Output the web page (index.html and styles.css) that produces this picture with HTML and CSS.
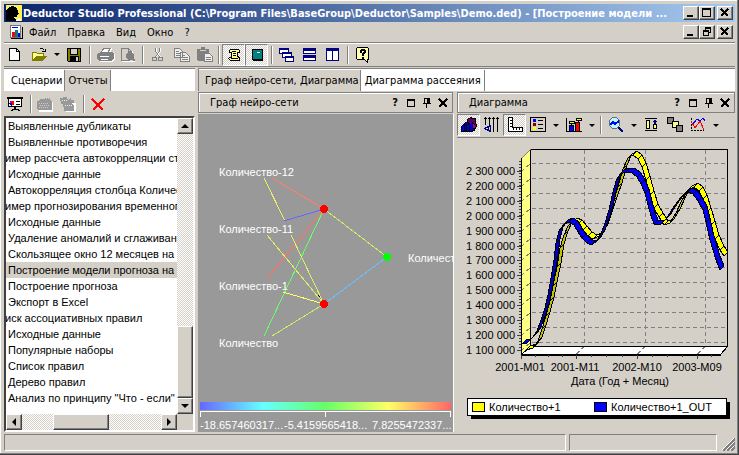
FILE: index.html
```html
<!DOCTYPE html>
<html lang="ru">
<head>
<meta charset="utf-8">
<title>Deductor Studio Professional</title>
<link rel="stylesheet" href="styles.css">
</head>
<body>
<div class="window">
  <header class="titlebar">
    <svg class="app-icon" width="16" height="16" viewBox="0 0 16 16"><path fill="#ffef50" d="M0 0h16v16H0z"/><path d="M0 6l3-4 4-1 4 2 1 3 1 3-2 1v2H8l1 2 4 2v2H0z"/><path fill="#fff" d="M12 13l3 1v2h-5z"/></svg>
    <h1>Deductor Studio Professional (C:\Program Files\BaseGroup\Deductor\Samples\Demo.ded) - [Построение модели ...</h1>
    <div class="win-buttons">
      <button aria-label="Свернуть"><svg width="12" height="10" viewBox="0 0 12 10"><path d="M2 7h6v2H2z"/></svg></button>
      <button aria-label="Развернуть"><svg width="12" height="10" viewBox="0 0 12 10"><path fill-rule="evenodd" d="M1 0h9v9H1zM2 2v6h7V2z"/></svg></button>
      <button class="close" aria-label="Закрыть"><svg width="12" height="10" viewBox="0 0 12 10"><path class="x" d="M2 1l7 7m0-7l-7 7"/></svg></button>
    </div>
  </header>
  <nav class="menubar">
    <svg class="doc-icon" width="15" height="16" viewBox="0 0 15 16"><path fill="#fff" stroke="#777" d="M1.500 1.500h10v12h-10z"/><path d="M2 14h11V3h1v12H2z"/><path fill="#00f" d="M3 3h6v1H3z"/><path fill="#f00" d="M3 8h3v5H3z"/><path fill="#008080" d="M6 6h3v7H6z"/><path fill="#00f" d="M9 9h2v4H9z"/></svg>
    <button>Файл</button><button>Правка</button><button>Вид</button><button>Окно</button><button>?</button>
    <div class="win-buttons">
      <button aria-label="Свернуть документ"><svg width="12" height="10" viewBox="0 0 12 10"><path d="M2 7h6v2H2z"/></svg></button>
      <button aria-label="Восстановить документ"><svg width="12" height="10" viewBox="0 0 12 10"><path fill-rule="evenodd" d="M4 0h6v6H8v3H2V3h2zM5 2v1h3v2h1V2zM3 5v3h4V5z"/></svg></button>
      <button class="close" aria-label="Закрыть документ"><svg width="12" height="10" viewBox="0 0 12 10"><path class="x" d="M2 1l7 7m0-7l-7 7"/></svg></button>
    </div>
  </nav>
  <div class="toolbar">
    <button class="tool" aria-label="Новый"><svg width="16" height="16" viewBox="0 0 16 16"><path fill="#fff" stroke="#000" d="M1.500 1.500h7l3 3v9h-10z"/><path fill="none" stroke="#000" d="M8.500 1.500v3h3"/></svg></button>
    <button class="tool" aria-label="Открыть"><svg width="16" height="16" viewBox="0 0 16 16"><path fill="none" stroke="#000" d="M8.500 2.500c2-2 4-1 5 1M11 4.500h3v-3"/><path fill="#ff8" stroke="#808000" d="M1.500 13V5.500h4l1 1h6V9"/><path fill="#808000" d="M1 14l4-5h11l-4 5z"/></svg></button>
    <button class="drop" aria-label="Недавние"><i class="caret"></i></button>
    <button class="tool" aria-label="Сохранить"><svg width="16" height="16" viewBox="0 0 16 16"><path d="M0 1h14v14H1l-1-1z"/><path fill="#808000" d="M1 2h2v6h8V2h2v12H1z"/><path fill="#d4d0c8" d="M4 2h6v5H4z"/><path d="M3 9h9v5H3z"/><path fill="#d4d0c8" d="M9 10h2v4H9z"/></svg></button>
    <i class="sep"></i>
    <button class="tool" aria-label="Печать" disabled><svg width="18" height="16" viewBox="0 0 18 16"><path fill="#fff" d="M1 8l3-3 2-4h9l-1 4h3l1 3v4l-3 3H3l-2-2z"/><path fill="#808080" fill-rule="evenodd" d="M0 7l4-2 2-4h8l-2 4h3l2 2v4l-3 3H2l-2-2zM7 2L5 5h6l1-3zM3 9v1h9V9zm1 3v1h7v-1z"/></svg></button>
    <button class="tool" aria-label="Просмотр" disabled><svg width="17" height="16" viewBox="0 0 17 16"><path fill="none" stroke="#fff" d="M2 14.500h13M12.500 4v3"/><path fill="none" stroke="#808080" d="M1.500 13.500v-12h7l3 3v2M8.500 1.500v3h3M1.500 13.500h8"/><circle cx="10" cy="9" r="4" fill="#808080"/><path stroke="#808080" stroke-width="2" d="M12 11l3 3"/></svg></button>
    <i class="sep"></i>
    <button class="tool" aria-label="Вырезать" disabled><svg width="16" height="16" viewBox="0 0 16 16"><path fill="none" stroke="#fff" d="M6.500 1v3l4 6m0-9v3l-4 6"/><path fill="none" stroke="#808080" d="M5.500 1v3l4 6m0-9v3l-4 6"/><circle cx="4.500" cy="12" r="2" fill="none" stroke="#808080"/><circle cx="10.500" cy="12" r="2" fill="none" stroke="#808080"/></svg></button>
    <button class="tool" aria-label="Копировать" disabled><svg width="18" height="16" viewBox="0 0 18 16"><path fill="#eee" stroke="#808080" d="M1.500 1.500h5l3 3v6h-8zM7.500 5.500h5l4 4v5h-9z"/><path stroke="#808080" d="M3 4.500h3M3 6.500h4M3 8.500h4M9 8.500h3M9 10.500h6M9 12.500h6"/></svg></button>
    <button class="tool" aria-label="Вставить" disabled><svg width="18" height="16" viewBox="0 0 18 16"><path fill="#808080" d="M1 2h4V0h4v2h4v12H2l-1-1z"/><path fill="#d4d0c8" d="M4 3h6v1H4z"/><path fill="#eee" stroke="#808080" d="M8.500 6.500h5l3 3v5h-8z"/><path stroke="#808080" d="M10 10.500h5M10 12.500h5"/></svg></button>
    <i class="sep"></i>
    <button class="tool pressed" aria-label="Сценарии"><svg width="16" height="16" viewBox="0 0 16 16"><path fill="#ffff90" stroke="#000" d="M4.500 2.500h8l1 1v2h-2v4l2 1v3h-9l-2-2 1-1h2v-5h-2v-2z"/><path stroke="#000" d="M6 4.500h4M7 6.500h3M7 8.500h3M5 11.500h7"/></svg></button>
    <button class="tool pressed" aria-label="Отчеты"><svg width="16" height="16" viewBox="0 0 16 16"><path d="M3 2h11v12H4l-1-1z"/><path fill="#008080" d="M4 3h9v9H4z"/><path fill="#fff" d="M8 5h3v1H8zM2 4h1v1H2zM2 7h1v1H2zM2 10h1v1H2z"/></svg></button>
    <i class="sep"></i>
    <button class="tool" aria-label="Каскадом"><svg width="16" height="16" viewBox="0 0 16 16"><g fill="#fff" stroke="#000080"><path d="M.5 1.500h9v5h-9zM3.500 5.500h9v5h-9zM6.500 9.500h8v5h-8z"/><path stroke-width="2" d="M0 2h10M3 6h10M6 10h9"/></g></svg></button>
    <button class="tool" aria-label="По горизонтали"><svg width="16" height="16" viewBox="0 0 16 16"><g fill="#fff" stroke="#000080"><path d="M1.500 1.500h12v5h-12zM1.500 8.500h12v5h-12z"/><path stroke-width="2" d="M1 3h13M1 10h13"/></g></svg></button>
    <button class="tool" aria-label="По вертикали"><svg width="16" height="16" viewBox="0 0 16 16"><g fill="#fff" stroke="#000080"><path d="M1.500 1.500h6v12h-6zM7.500 1.500h6v12h-6z"/><path stroke-width="2" d="M1 3h13"/></g></svg></button>
    <i class="sep"></i>
    <button class="tool" aria-label="Справка"><svg width="16" height="16" viewBox="0 0 16 16"><path fill="#ffffb0" stroke="#000" d="M2.500.5h10l1 1v11h-1v3l-3-3h-7l-1-1v-10z"/><path d="M5 3h1V2h4v1h1v3h-1v1H9v2H7V6h1V5h1V4H7v2H5zM7 10h2v2H7z"/></svg></button>
  </div>

  <div class="workspace">
    <aside class="sidebar">
      <div class="tabs"><button class="tab plain">Сценарии</button><button class="tab active">Отчеты</button></div>
      <div class="side-tools">
        <button class="tool" aria-label="Показать"><svg width="16" height="16" viewBox="0 0 16 16"><path fill="#fff" stroke="#000" d="M1.500 2.500h13v8h-13z"/><path d="M0 1h16v2H0zM7 11h2v2h2l2 2h-2l-1-1H6l-1 1H3l2-2h2z"/><circle cx="5" cy="7" r="2.500" fill="#f00"/><path fill="#00f" d="M5 4v3H2v1l2 2h1z"/><path stroke="#000" d="M9 5.500h4M9 8.500h4"/></svg></button>
        <i class="sep"></i>
        <button class="tool" aria-label="Добавить папку" disabled><svg width="16" height="16" viewBox="0 0 16 16"><path fill="#fff" d="M1 5l15 1v10H2z"/><path fill="#999" d="M0 5h2l1-2h4l2-2v2l2-2v2l2-2v3l2 1v9H1l-1-1z"/><path fill="none" stroke="#ccc" stroke-dasharray="1 1" d="M2 7.500h10M3 9.500h10M2 11.500h10"/></svg></button>
        <button class="tool" aria-label="Добавить узел" disabled><svg width="16" height="16" viewBox="0 0 16 16"><path fill="#fff" d="M5 7h11v9H6z"/><path fill="#999" d="M0 2h3V1h4l1 3 3-2v2h3v3h-3l3 2v6H4v-4H3V8H1z"/><path stroke="#eee" stroke-dasharray="1 1" d="M2 4.500h6M5 9.500h7"/></svg></button>
        <i class="sep"></i>
        <button class="tool" aria-label="Удалить"><svg width="16" height="16" viewBox="0 0 16 16"><path stroke="red" stroke-width="2" d="M2 3l11 11M14 3L3 14"/></svg></button>
      </div>
      <div class="tree">
        <ul>
          <li>Выявленные дубликаты</li>
          <li>Выявленные противоречия</li>
          <li class="parent">имер рассчета автокорреляции ст</li>
          <li>Исходные данные</li>
          <li>Автокорреляция столбца Количес</li>
          <li class="parent">имер прогнозирования временног</li>
          <li>Исходные данные</li>
          <li>Удаление аномалий и сглаживан</li>
          <li>Скользящее окно 12 месяцев на</li>
          <li class="selected">Построение модели прогноза на</li>
          <li>Построение прогноза</li>
          <li>Экспорт в Excel</li>
          <li class="parent">иск ассоциативных правил</li>
          <li>Исходные данные</li>
          <li>Популярные наборы</li>
          <li>Список правил</li>
          <li>Дерево правил</li>
          <li>Анализ по принципу "Что - если"</li>
        </ul>
        <div class="scroll vertical"><button aria-label="Вверх"><i class="arrow up"></i></button><span class="track before"></span><span class="thumb"></span><button aria-label="Вниз"><i class="arrow down"></i></button></div>
        <div class="scroll horizontal"><button aria-label="Влево"><i class="arrow left"></i></button><span class="track before"></span><span class="thumb"></span><span class="track after"></span><button aria-label="Вправо"><i class="arrow right"></i></button></div>
      </div>
    </aside>

    <main class="report">
      <div class="tabs"><button class="tab active">Граф нейро-сети, Диаграмма</button><button class="tab plain">Диаграмма рассеяния</button></div>
      <div class="panels">
        <section class="panel">
          <header class="panel-head"><h2>Граф нейро-сети</h2>
            <button aria-label="Справка">?</button>
            <button aria-label="Развернуть"><svg width="10" height="10" viewBox="0 0 10 10"><path fill-rule="evenodd" d="M1 1h8v8H1zM2 3v5h6V3z"/></svg></button>
            <button aria-label="Закрепить"><svg width="10" height="10" viewBox="0 0 10 10"><path fill-rule="evenodd" d="M2 0h6v5h1v1H5v4H4V6H1V5h1zM3 1v4h2V1z"/></svg></button>
            <button aria-label="Закрыть"><svg width="10" height="10" viewBox="0 0 10 10"><path class="x" d="M1 1l8 8m0-8L1 9"/></svg></button>
          </header>
          <div class="graph">
            <svg viewBox="198 114 255 318" preserveAspectRatio="xMinYMin slice">
              <defs><linearGradient id="scale"><stop offset="0" stop-color="#66f"/><stop offset=".25" stop-color="#6ff"/><stop offset=".5" stop-color="#6f6"/><stop offset=".75" stop-color="#ff6"/><stop offset="1" stop-color="#f66"/></linearGradient></defs>
              <g class="edges">
                <path stroke="#ff8066" d="M272 178L324 209"/><path stroke="#e8f066" d="M264 178L285 221"/><path stroke="#66f" d="M284 221L324 209"/>
                <path stroke="#ff7066" d="M267 279L324 209"/><path stroke="#66ff66" d="M264 336L324 209"/><path stroke="#e0f066" d="M267 235L324 304M291 235L324 304"/>
                <path stroke="#ffff66" d="M283 292L324 304"/><path stroke="#c8f066" d="M272 336L324 304M324 209L387 257"/><path stroke="#66c0ff" d="M324 304L387 257"/>
              </g>
              <path d="M318 219l2-2v1l-2 1zM318 295l2 1v2z"/>
              <circle cx="324" cy="209" r="4" fill="red"/><circle cx="324" cy="304" r="4" fill="red"/><circle cx="387" cy="257" r="4" fill="#0f0"/>
              <g class="node-text"><text x="219" y="176">Количество-12</text><text x="219" y="233">Количество-11</text><text x="219" y="290">Количество-1</text><text x="219" y="347">Количество</text><text x="408" y="262">Количество</text></g>
              <path fill="url(#scale)" d="M200 402h251v8H200z"/><path fill="none" stroke="#fff" d="M200.500 417v-5.500h250v5.500M325.500 411v6"/>
              <g class="node-text"><text x="200" y="429">-18.657460317...</text><text x="284" y="429">-5.4159565418...</text><text x="372" y="429">7.8255472337...</text></g>
            </svg>
          </div>
        </section>
        <section class="panel">
          <header class="panel-head"><h2>Диаграмма</h2>
            <button aria-label="Справка">?</button>
            <button aria-label="Развернуть"><svg width="10" height="10" viewBox="0 0 10 10"><path fill-rule="evenodd" d="M1 1h8v8H1zM2 3v5h6V3z"/></svg></button>
            <button aria-label="Закрепить"><svg width="10" height="10" viewBox="0 0 10 10"><path fill-rule="evenodd" d="M2 0h6v5h1v1H5v4H4V6H1V5h1zM3 1v4h2V1z"/></svg></button>
            <button aria-label="Закрыть"><svg width="10" height="10" viewBox="0 0 10 10"><path class="x" d="M1 1l8 8m0-8L1 9"/></svg></button>
          </header>
          <div class="chart-tools">
            <button class="tool pressed" aria-label="Объемная"><svg width="16" height="16" viewBox="0 0 16 16"><path fill="#600060" stroke="#000" d="M6.500 6.500v-4l3-2 2 1h3v4l1 3-2 5-9 0z"/><path d="M0 9l4-4 3-1 2 3 2-2 3 2v5l-2 3H0z"/><path fill="#0000d0" d="M1 10l3-4 2-1 2 4 2-3 2 2v4l-1 2H1z"/><path stroke="#000" d="M3.500 7v8M5.500 7v8M8.500 9v6"/><path fill="#802050" d="M12 7l3 2-2 3-1-1z"/></svg></button>
            <button class="tool" aria-label="Порядок серий"><svg width="16" height="16" viewBox="0 0 16 16"><path fill="none" stroke="#000" d="M1.500 0v8M5.500 0v8M9.500 0v15M13.500 0v15M0 1.500h3M4 1.500h3M8 1.500h3M12 1.500h3"/><path fill="none" stroke="#000080" d="M6.500 8.500v6l-6-3zM4.500 10v3"/></svg></button>
            <button class="tool pressed" aria-label="Оси"><svg width="16" height="16" viewBox="0 0 16 16"><path fill="#fff" stroke="#000" d="M1.500.5h4v10h10v4h-14z"/><path stroke="#000" d="M3 3.500h2M3 6.500h2M3 9.500h2M6.500 11v2M9.500 11v2M12.500 11v2"/></svg></button>
            <button class="tool" aria-label="Легенда"><svg width="16" height="16" viewBox="0 0 16 16"><path fill="#d4d0c8" stroke="#000" d="M.5.5h15v14H.5z"/><path fill="#00f" d="M3 2h3v3H3z"/><path fill="#800000" d="M3 6h3v3H3z"/><path fill="#ff0" d="M3 10h3v3H3z"/><path stroke="#000" d="M8 3.500h5M8 7.500h5M8 11.500h5"/></svg></button>
            <button class="drop" aria-label="Настройки легенды"><i class="caret"></i></button>
            <button class="tool" aria-label="Тип"><svg width="16" height="16" viewBox="0 0 16 16"><path stroke="#000" d="M.5 1v14M0 14.500h16M5.500 5v4M12.500 2v3"/><path fill="#00f" stroke="#000" d="M3.500 8.500h4v6h-4z"/><path fill="red" stroke="#000" d="M9.500 5.500h4v9h-4z"/><path fill="#ff0" stroke="#000" d="M3.500 4.500h5v2h-5zM10.500 1.500h5v2h-5z"/></svg></button>
            <button class="drop" aria-label="Типы диаграмм"><i class="caret"></i></button>
            <i class="sep"></i>
            <button class="tool" aria-label="Масштаб"><svg width="16" height="16" viewBox="0 0 16 16"><path stroke="#000080" stroke-width="2" d="M10 10l5 5"/><circle cx="6.500" cy="6" r="5.500" fill="#b8fbff" stroke="#657070"/><path fill="none" stroke="#00f" stroke-width="2" d="M2 8l3-3 2 2 4-3"/></svg></button>
            <button class="drop" aria-label="Варианты масштаба"><i class="caret"></i></button>
            <button class="tool" aria-label="Размеры"><svg width="16" height="16" viewBox="0 0 16 16"><path stroke="#000" d="M1 1.500h12M1 13.500h12"/><path fill="#ff8" stroke="#000" d="M2.500 3.500h3v8h-3zM9.500 7.500h3v4h-3z"/><path d="M10 3h2v1h1v1h-1v2h-2V5H9V4h1z" fill="#000080"/></svg></button>
            <button class="tool" aria-label="Слои"><svg width="16" height="16" viewBox="0 0 16 16"><g stroke="#000"><path fill="#808080" d="M.5.500h6v6h-6z"/><path fill="#ff8" d="M5.500 4.500h6v6h-6z"/><path fill="#808080" d="M9.500 8.500h6v6h-6z"/></g></svg></button>
            <button class="tool" aria-label="Серии"><svg width="16" height="16" viewBox="0 0 16 16"><path fill="none" stroke="#000" d="M1.500 1v13M1 13.500h13" stroke-dasharray="2 1"/><path fill="none" stroke="#00f" d="M2 8l5-6 3 2 3-3 2 3"/><path fill="none" stroke="red" d="M1 4l4 7 5-7 4 9"/></svg></button>
            <button class="drop" aria-label="Выбор серий"><i class="caret"></i></button>
          </div>
          <div class="chart">
            <svg viewBox="457 138 278 294" preserveAspectRatio="xMinYMin meet">
              <path fill="#ffff80" d="M521.500 158.500l9-9v197l-9 8z"/>
              <path fill="#fff" stroke="#000" d="M521.500 354.500l9-8h197l-7 8z"/>
              <g id="grid"></g>
              <path fill="none" stroke="#000" d="M530.500 346.500v-197h197v197z"/><path d="M521 158h1v196h199v1.500H521z"/>
              <path fill="none" stroke="#808080" d="M521.500 158.500l9-9"/>
              <g id="ribbons"></g>
              <g id="axis"></g>
              <g class="centered"><text x="520" y="371">2001-M01</text><text x="575" y="371">2001-M11</text><text x="637" y="371">2002-M10</text><text x="697" y="371">2003-M09</text><text x="620" y="385">Дата (Год + Месяц)</text></g>
              <path d="M471 402h259v17H471z"/><path fill="#fff" stroke="#000" d="M467.500 398.500h259v17h-259z"/>
              <path fill="#ff0" stroke="#000" d="M472.500 402.500h12v9h-12z"/><path fill="#00f" stroke="#000" d="M594.500 402.500h12v9h-12z"/>
              <text x="489" y="411">Количество+1</text><text x="611" y="411">Количество+1_OUT</text>
            </svg>
          </div>
        </section>
      </div>
    </main>
  </div>
  <footer class="status"><span class="wide"></span><span class="narrow"></span><svg width="13" height="13" viewBox="0 0 13 13"><path stroke="#808080" stroke-width="2" d="M1 13L13 1M5 13l8-8M9 13l4-4"/><path stroke="#fff" d="M0 12L12 0M4 12l8-8M8 12l4-4"/></svg></footer>
</div>
<script src="chart.js"></script>
</body>
</html>
```
FILE: styles.css
```css
* { box-sizing: border-box; }
body { margin: 0; background: #d4d0c8; color: #000; font: 11px "Liberation Sans", sans-serif; }
button { font: inherit; color: inherit; background: none; border: 0; padding: 0; margin: 0; display: flex; align-items: center; justify-content: center; flex: none; }
h1, h2, ul { margin: 0; padding: 0; font-size: inherit; font-weight: normal; }
svg { display: block; shape-rendering: crispEdges; flex: none; }
.x { fill: none; stroke: #000; stroke-width: 2; }

.window { height: 100vh; padding: 4px 3px 3px 4px; display: flex; flex-direction: column; border-right: 1px solid #404040; border-bottom: 1px solid #404040; box-shadow: inset -1px -1px #808080, inset 1px 1px #fff; }

.titlebar { height: 18px; flex: none; display: flex; align-items: center; padding-left: 2px; gap: 1px; color: #fff; background: linear-gradient(to right, #0a246a, #a6caf0); }
.titlebar h1 { flex: 1; min-width: 0; font: bold 11px "DejaVu Sans Condensed", sans-serif; white-space: nowrap; overflow: hidden; }
.win-buttons { display: flex; margin-left: auto; padding-right: 2px; }
.win-buttons button { width: 16px; height: 14px; background: #d4d0c8; border: 1px solid; border-color: #fff #404040 #404040 #fff; box-shadow: inset -1px -1px #808080; }
.win-buttons .close { margin-left: 2px; }

.menubar { height: 20px; flex: none; display: flex; align-items: center; padding-left: 5px; font-family: "DejaVu Sans Condensed", sans-serif; }
.menubar > button { padding: 0 6px 0 5px; height: 20px; }

.toolbar { height: 25px; flex: none; display: flex; align-items: center; border-top: 1px solid #808080; border-bottom: 1px solid #808080; box-shadow: inset 0 1px #fff; }
.tool { width: 23px; height: 22px; justify-content: flex-start; padding-left: 4px; }
.drop { width: 13px; height: 22px; }
.caret { border: 3px solid transparent; border-top-color: #000; border-bottom: 0; }
.sep { width: 4px; height: 18px; flex: none; border-left: 1px solid #808080; box-shadow: inset 1px 0 #fff; margin-left: 3px; }
.pressed { border: 1px solid; border-color: #808080 #fff #fff #808080; padding-left: 3px; background: repeating-conic-gradient(#fff 0 25%, #d4d0c8 0 50%) 0 0 / 2px 2px; }

.workspace { flex: 1; min-height: 0; display: grid; grid-template-columns: 191px minmax(0, 1fr); gap: 3px; margin-top: 1px; }
.sidebar, .report, .panel { display: flex; flex-direction: column; min-width: 0; min-height: 0; }
.tabs { height: 23px; flex: none; display: flex; align-items: stretch; background: #fff; border-top: 1px solid #808080; padding-top: 1px; font-family: "DejaVu Sans Condensed", sans-serif; }
.tab { padding: 0 3px; border-right: 1px solid #808080; white-space: nowrap; }
.tab.active { background: #d4d0c8; }
.sidebar .plain { padding: 0 2px 0 7px; }
.sidebar .active { padding-right: 2px; }
.report .tabs { border-left: 1px solid #808080; }
.report .active { padding: 0 1px 0 6px; }
.report .plain { padding-left: 4px; }

.side-tools { height: 25px; flex: none; display: flex; align-items: center; }
.side-tools .tool { padding-left: 3px; }
.tree { flex: 1; min-height: 0; display: grid; grid-template: minmax(0, 1fr) 16px / minmax(0, 1fr) 16px; border: 2px solid; border-color: #404040 #fff #fff #404040; }
.tree ul { background: #fff; list-style: none; overflow: hidden; }
.tree li { height: 16px; line-height: 16px; padding-left: 2px; white-space: nowrap; }
.tree .parent { padding-left: 0; text-indent: -1px; }
.tree .selected { background: #d4d0c8; }
.scroll { display: flex; background: repeating-conic-gradient(#fff 0 25%, #d4d0c8 0 50%) 0 0 / 2px 2px; }
.vertical { flex-direction: column; }
.scroll button, .thumb { background: #d4d0c8; border: 1px solid; border-color: #fff #404040 #404040 #fff; box-shadow: inset -1px -1px #808080; }
.scroll button { width: 16px; height: 16px; }
.vertical .before { flex: 193; }
.vertical .thumb { flex: 71; }
.horizontal .before { flex: 31; }
.horizontal .thumb { flex: 55; }
.horizontal .after { flex: 53; }
.arrow { border: 4px solid transparent; }
.up { border-bottom-color: #000; border-top: 0; }
.down { border-top-color: #000; border-bottom: 0; }
.left { border-right-color: #000; border-left: 0; }
.right { border-left-color: #000; border-right: 0; }

.panels { flex: 1; min-height: 0; display: grid; grid-template-columns: 255fr 278fr; gap: 4px; margin-top: 1px; }
.panel-head { height: 21px; flex: none; display: flex; align-items: center; border: 1px solid #808080; box-shadow: inset 1px 1px #fff; padding: 0 1px 0 11px; font-family: "DejaVu Sans Condensed", sans-serif; }
.panel-head h2 { flex: 1; }
.panel-head button { width: 16px; height: 18px; font-weight: bold; }
.graph { flex: 1; min-height: 0; background: #999; box-shadow: 1px 0 #fff; margin-top: 1px; }
.graph svg, .chart svg { width: 100%; height: 100%; }
.edges { fill: none; }
.node-text { fill: #fff; }
.chart { flex: 1; min-height: 0; }
.chart-tools { height: 25px; flex: none; display: flex; align-items: center; border-bottom: 1px solid #808080; }
.chart-tools .sep { margin-left: 2px; }
.centered { text-anchor: middle; }
.values { text-anchor: end; }
.grid-lines { stroke: #808080; stroke-dasharray: 4 3; fill: none; }
.ticks { stroke: #404040; fill: none; }
.ribbon { stroke: #000; stroke-width: 1px; stroke-linejoin: round; }

.status { height: 19px; flex: none; display: flex; align-items: stretch; gap: 3px; padding: 2px 0 0; }
.status span { border: 1px solid; border-color: #808080 #fff #fff #808080; }
.wide { flex: 562; }
.narrow { flex: 147; }
.status svg { align-self: flex-end; margin-left: 2px; }
```
FILE: chart.js
```javascript
const NS = "http://www.w3.org/2000/svg";

function add(parent, name, attrs, text) {
  const el = document.createElementNS(NS, name);
  for (const key in attrs) el.setAttribute(key, attrs[key]);
  if (text) el.textContent = text;
  parent.appendChild(el);
}

const out = [[522,344],[527,343],[533,337],[537,331],[541,320],[545,308],[548,295],[551,278],[554,260],[556,243],[559,231],[564,224],[569,222],[574,225],[578,232],[582,238],[587,243],[591,245],[596,242],[601,234],[605,223],[609,210],[612,196],[616,181],[620,174],[626,172],[632,173],[637,177],[641,184],[645,193],[648,205],[651,216],[654,224],[660,225],[666,219],[673,208],[681,197],[688,192],[693,194],[698,201],[703,210],[706,222],[709,236],[713,250],[716,260],[720,270]];
const source = [[526,350],[533,348],[538,341],[542,329],[546,316],[550,301],[553,286],[557,267],[560,248],[564,235],[568,226],[573,222],[578,224],[583,230],[588,236],[593,239],[599,236],[604,228],[609,213],[613,201],[618,187],[623,169],[628,158],[633,155],[638,159],[642,167],[646,180],[650,195],[654,208],[659,217],[664,225],[670,223],[676,213],[682,200],[688,190],[694,187],[699,191],[703,199],[707,212],[711,225],[715,239],[720,250],[724,256]];

function ribbon(points, bright, dark) {
  const parent = document.getElementById("ribbons");
  for (let i = 1; i < points.length; i++) {
    const [ax, ay] = points[i - 1], [bx, by] = points[i];
    const rising = ay - by > bx - ax;
    add(parent, "polygon", {
      class: "ribbon", fill: rising ? dark : bright,
      points: `${ax},${ay} ${ax + 4},${ay - 4} ${bx + 4},${by - 4} ${bx},${by}`
    });
  }
}

const grid = document.getElementById("grid");
const axis = document.getElementById("axis");
let lines = "M584.5 150v196l-8 8M645.5 150v196l-8 8M705.5 150v196l-8 8";
let ticks = "";
for (let i = 0; i < 13; i++) {
  const value = 2300 - i * 100;
  const y = 171 + Math.round(i * 14.9);
  lines += `M521.5 ${y + 0.5}l9-8h196`;
  ticks += `M517 ${y + 0.5}h4`;
  const label = Math.floor(value / 1000) + " " + String(value % 1000).padStart(3, "0") + " 000";
  add(axis, "text", { class: "values", x: 515, y: y + 4 }, label);
}
for (let y = 161; y < 353; y += 3) ticks += `M519 ${y + 0.5}h2`;
for (const x of [521, 576, 637, 697]) ticks += `M${x + 0.5} 355v4`;
for (const x of [535, 548, 562, 591, 606, 622, 652, 667, 682, 711]) ticks += `M${x + 0.5} 355v2`;
add(grid, "path", { class: "grid-lines", d: lines });
add(axis, "path", { class: "ticks", d: ticks });
ribbon(source, "#ffff00", "#c0c000");
ribbon(out, "#0000ff", "#0000c0");
```
